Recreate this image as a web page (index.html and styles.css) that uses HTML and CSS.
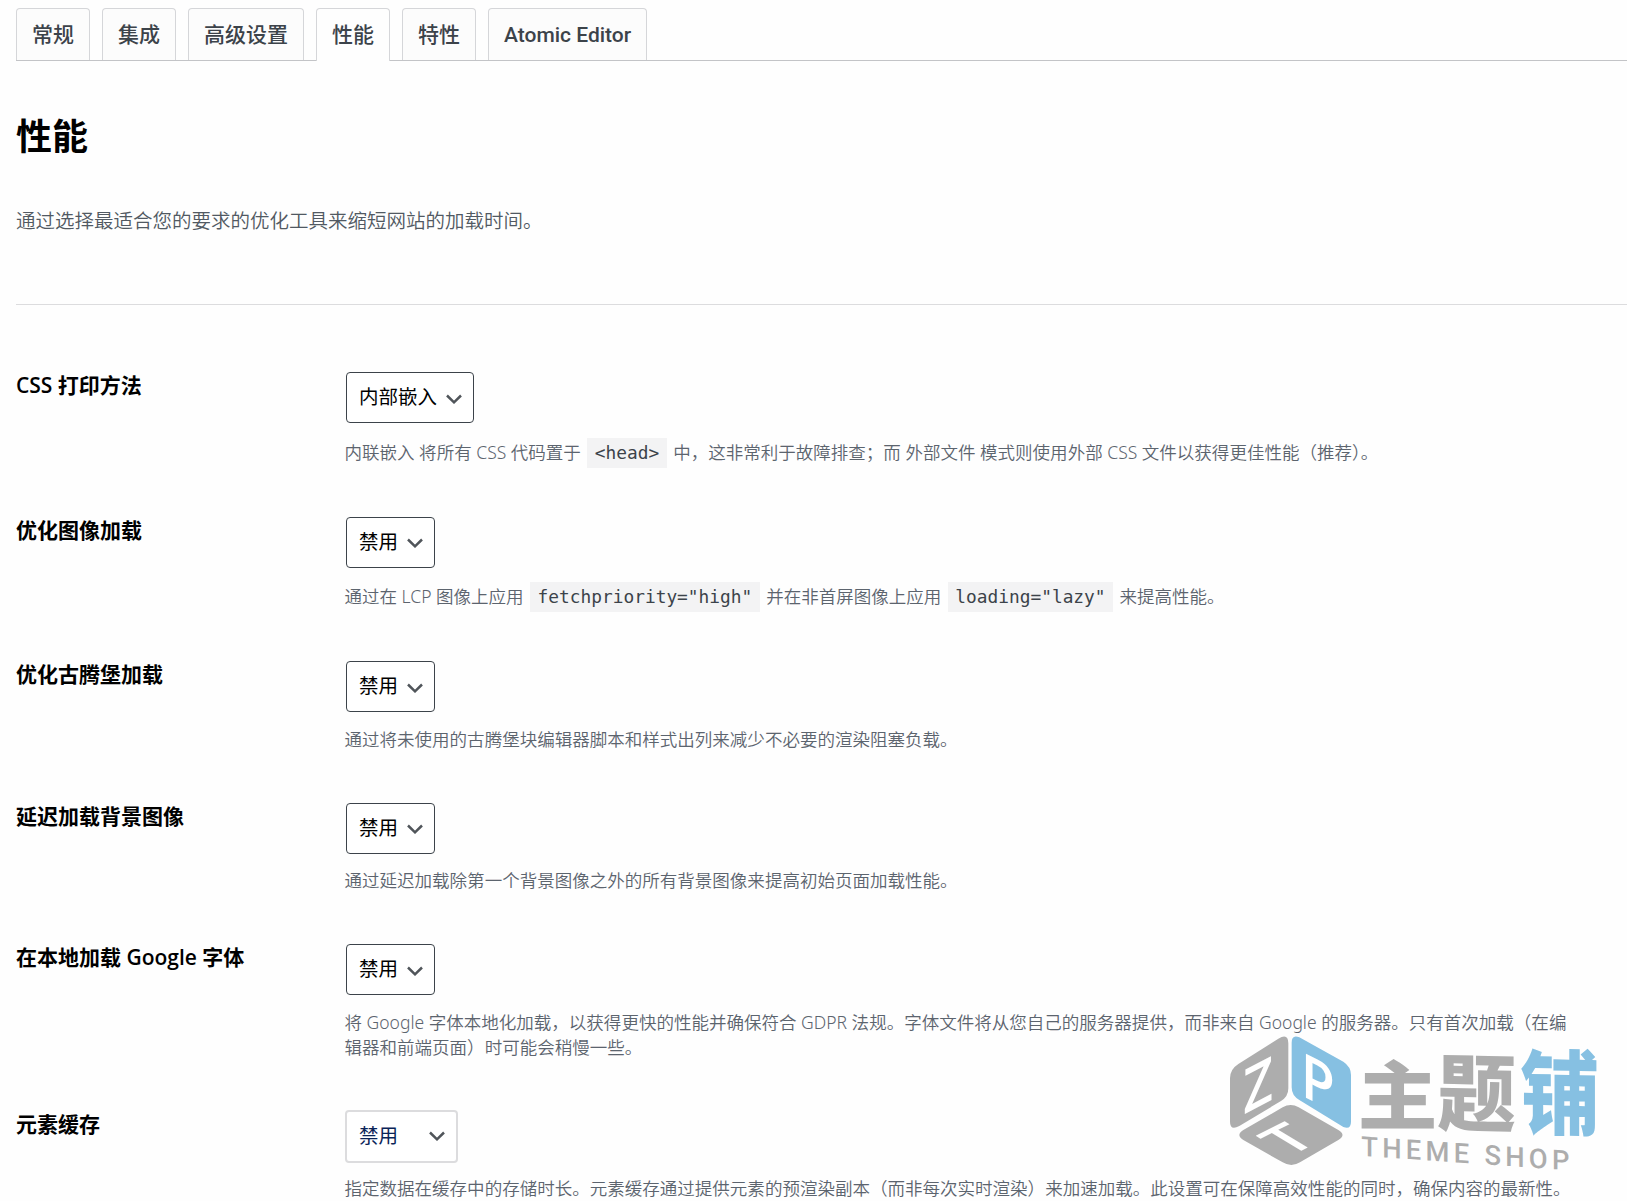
FILE: index.html
```html
<!DOCTYPE html>
<html lang="zh-CN">
  <head>
    <meta charset="UTF-8" />
    <meta name="viewport" content="width=device-width, initial-scale=1.0" />
    <title>性能</title>
    <link rel="stylesheet" href="styles.css">
  </head>
  <body>
    <nav class="tabs">
      <a class="tab">常规</a>
      <a class="tab">集成</a>
      <a class="tab">高级设置</a>
      <a class="tab active">性能</a>
      <a class="tab">特性</a>
      <a class="tab">Atomic Editor</a>
    </nav>

    <main class="settings">
      <h2 class="title">性能</h2>
      <p class="intro">通过选择最适合您的要求的优化工具来缩短网站的加载时间。</p>
      <hr class="divider">

      <div class="rows">
        <div class="row">
          <div class="label">CSS 打印方法</div>
          <div class="field">
            <div class="select-wrap">
              <select class="select"><option>内部嵌入</option></select>
              <svg class="arrow" viewBox="0 0 16 10"><path d="M1 1.5L8 8.3l7-6.8" /></svg>
            </div>
            <p class="description with-code">内联嵌入 将所有 CSS 代码置于 <code>&lt;head&gt;</code> 中，这非常利于故障排查；而 外部文件 模式则使用外部 CSS 文件以获得更佳性能（推荐）。</p>
          </div>
        </div>

        <div class="row">
          <div class="label">优化图像加载</div>
          <div class="field">
            <div class="select-wrap">
              <select class="select"><option>禁用</option></select>
              <svg class="arrow" viewBox="0 0 16 10"><path d="M1 1.5L8 8.3l7-6.8" /></svg>
            </div>
            <p class="description with-code">通过在 LCP 图像上应用 <code>fetchpriority="high"</code> 并在非首屏图像上应用 <code>loading="lazy"</code> 来提高性能。</p>
          </div>
        </div>

        <div class="row">
          <div class="label">优化古腾堡加载</div>
          <div class="field">
            <div class="select-wrap">
              <select class="select"><option>禁用</option></select>
              <svg class="arrow" viewBox="0 0 16 10"><path d="M1 1.5L8 8.3l7-6.8" /></svg>
            </div>
            <p class="description">通过将未使用的古腾堡块编辑器脚本和样式出列来减少不必要的渲染阻塞负载。</p>
          </div>
        </div>

        <div class="row">
          <div class="label">延迟加载背景图像</div>
          <div class="field">
            <div class="select-wrap">
              <select class="select"><option>禁用</option></select>
              <svg class="arrow" viewBox="0 0 16 10"><path d="M1 1.5L8 8.3l7-6.8" /></svg>
            </div>
            <p class="description">通过延迟加载除第一个背景图像之外的所有背景图像来提高初始页面加载性能。</p>
          </div>
        </div>

        <div class="row">
          <div class="label">在本地加载 Google 字体</div>
          <div class="field">
            <div class="select-wrap">
              <select class="select"><option>禁用</option></select>
              <svg class="arrow" viewBox="0 0 16 10"><path d="M1 1.5L8 8.3l7-6.8" /></svg>
            </div>
            <p class="description">将 Google 字体本地化加载，以获得更快的性能并确保符合 GDPR 法规。字体文件将从您自己的服务器提供，而非来自 Google 的服务器。只有首次加载（在编辑器和前端页面）时可能会稍慢一些。</p>
          </div>
        </div>

        <div class="row">
          <div class="label">元素缓存</div>
          <div class="field">
            <div class="select-wrap light">
              <select class="select"><option>禁用</option></select>
              <svg class="arrow" viewBox="0 0 16 10"><path d="M1 1.5L8 8.3l7-6.8" /></svg>
            </div>
            <p class="description">指定数据在缓存中的存储时长。元素缓存通过提供元素的预渲染副本（而非每次实时渲染）来加速加载。此设置可在保障高效性能的同时，确保内容的最新性。</p>
          </div>
        </div>
      </div>
    </main>

    <!-- Theme Shop logo -->
    <svg class="watermark" viewBox="0 0 1281 603">
      <path class="grey" d="M90 235Q90 208 115 192L235 116Q265 98 265 130L265 265Q265 290 243 303L118 378Q90 393 90 365Z" />
      <path class="blue" d="M275 128Q275 103 298 112L430 185Q453 200 453 225L453 365Q453 390 430 381L298 300Q275 287 275 262Z" />
      <path class="grey" d="M248 322Q272 308 296 322L415 390Q440 405 415 420L300 487Q274 503 248 487L130 420Q106 405 130 390Z" />
      <text class="face" font-size="185" transform="matrix(.84 -.44 0 1 130 344)">Z</text>
      <text class="face" font-size="185" transform="matrix(.9 .45 0 1 302 286)">P</text>
      <text class="face" font-size="120" transform="matrix(1.35 -.68 1.2 .72 268 470)">T</text>
      <text class="grey cjk" font-size="232" transform="matrix(1.03 0 0 .95 473 370)">主</text>
      <text class="grey cjk" font-size="236" transform="matrix(1 .02 0 1.07 712 371)">题</text>
      <text class="blue cjk" font-size="238" transform="matrix(1 .02 0 1.16 961 380)">铺</text>
      <text class="grey shop" font-size="82" textLength="624" transform="matrix(1 .07 0 1 484 467)">THEME SHOP</text>
    </svg>
  </body>
</html>
```

FILE: styles.css
```css
* {
  box-sizing: border-box;
}

body {
  margin: 0;
  height: 1201px;
  overflow: hidden;
  position: relative;
  background: #fefefe;
  color: #000;
  font-family: "Open Sans", "Noto Sans CJK SC", sans-serif;
}

/* Tabs */
.tabs {
  display: flex;
  gap: 12px;
  margin-left: 16px;
  padding-top: 8px;
  border-bottom: 1px solid #c3c4c7;
}

.tab {
  height: 52px;
  padding: 0 15px;
  border: 1px solid #d5d6d9;
  border-bottom: 0;
  border-radius: 4px 4px 0 0;
  background: #fcfcfc;
  color: #3c434a;
  font: 500 21px/52px Roboto, "Noto Sans CJK SC", sans-serif;
}

.tab.active {
  height: 53px;
  margin-bottom: -1px;
  background: #fefefe;
}

.settings {
  padding-left: 16px;
}

.title {
  margin: 49px 0 0;
  font-size: 36px;
  line-height: 54px;
}

.intro {
  margin: 42px 0 0;
  color: #515962;
  font-size: 19.5px;
  font-weight: 350;
  line-height: 30px;
}

.divider {
  margin: 68px 0 0;
  border: 0;
  border-top: 1px solid #dcdcde;
}

/* Settings rows */
.rows {
  display: flex;
  flex-direction: column;
  gap: 51px;
  margin-top: 67px;
}

.row {
  display: flex;
}

.label {
  width: 328.5px;
  flex: none;
  font-size: 21px;
  font-weight: 600;
  line-height: 27.5px;
}

.field {
  width: 1230px;
}

.select-wrap {
  display: inline-block;
  position: relative;
  margin-left: 1.5px;
  vertical-align: top;
}

.select {
  display: block;
  appearance: none;
  height: 51px;
  padding: 0 35px 2px 12px;
  border: 1px solid #3c434a;
  border-radius: 4px;
  background: #fff;
  color: #000;
  font: 19.5px "Open Sans", "Noto Sans CJK SC", sans-serif;
}

.light {
  margin: -1px 0 -1px .5px;
}

.light .select {
  width: 113px;
  height: 53px;
  border: 2px solid #dcdcde;
  color: #0a2458;
}

.arrow {
  position: absolute;
  right: 12px;
  top: 21.5px;
  width: 16px;
  height: 10px;
  fill: none;
  stroke: #50555a;
  stroke-width: 2.5;
}

.light .arrow {
  right: 13px;
}

.description {
  margin: 14.5px 0 0;
  color: #5c646e;
  font-family: "Noto Sans", "Noto Sans CJK SC", sans-serif;
  font-size: 17.52px;
  font-weight: 350;
  line-height: 25px;
}

.description.with-code {
  line-height: 28px;
}

code {
  margin: 0 2px;
  padding: 4px 7.4px 5px;
  background: #f3f3f4;
  color: #3c434a;
  font: 17.84px/1 "DejaVu Sans Mono", monospace;
}

/* Logo over the bottom right corner */
.watermark {
  position: absolute;
  left: 1200px;
  top: 1000px;
  width: 427px;
  height: 201px;
}

.grey {
  fill: #adadad;
}

.blue {
  fill: #86c0e2;
}

.face {
  fill: #fff;
  font-family: "Open Sans", sans-serif;
  font-weight: 600;
}

.cjk {
  font-family: "Noto Sans CJK SC", sans-serif;
  font-weight: 900;
}

.shop {
  font-family: Roboto, sans-serif;
  font-weight: 500;
}
```
